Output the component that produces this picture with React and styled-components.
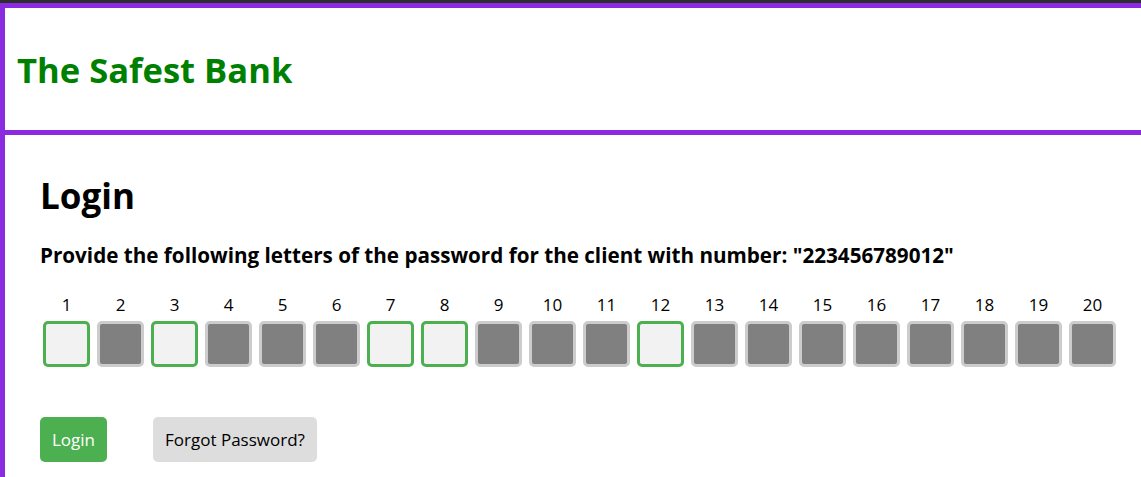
import React from "react";
import styled, { createGlobalStyle } from "styled-components";

const Global = createGlobalStyle`
  html, body { margin: 0; padding: 0; background: #fff; }
  body { font-family: "Open Sans", "Noto Sans", sans-serif; }
`;

const TopStrip = styled.div`
  height: 3px;
  background: #2e2e2e;
`;

const Frame = styled.div`
  border-top: 5px solid #8a2be2;
  border-left: 5px solid #8a2be2;
  min-height: calc(100vh - 3px);
  box-sizing: border-box;
`;

const Header = styled.header`
  height: 122px;
  border-bottom: 5px solid #8a2be2;
  display: flex;
  align-items: center;
  padding-left: 12px;
`;

const Brand = styled.h1`
  margin: 0;
  color: #008000;
  font-size: 34.6px;
  font-weight: 700;
`;

const Main = styled.main`
  padding: 39px 35px 0;
`;

const Title = styled.h2`
  margin: 0;
  font-size: 35px;
  line-height: 44px;
  font-weight: 700;
  color: #000;
`;

const Prompt = styled.p`
  margin: 23px 0 0;
  font-size: 20.65px;
  line-height: 28px;
  font-weight: 700;
  color: #000;
`;

const Grid = styled.div`
  display: flex;
  gap: 7px;
  margin: 25px 0 0 3px;
`;

const Cell = styled.div`
  display: flex;
  flex-direction: column;
  align-items: center;
  width: 47px;
`;

const Num = styled.span`
  font-size: 17px;
  line-height: 22px;
  color: #000;
`;

const Box = styled.div`
  margin-top: 5px;
  width: 47px;
  height: 46px;
  box-sizing: border-box;
  border-radius: 5px;
  border: 3px solid ${(p) => (p.$active ? "#4caf50" : "#cccccc")};
  background: ${(p) => (p.$active ? "#f2f2f2" : "#808080")};
`;

const Actions = styled.div`
  display: flex;
  gap: 46px;
  margin-top: 50px;
`;

const Button = styled.button`
  height: 45px;
  padding: 0 12px;
  border: none;
  border-radius: 5px;
  font-family: inherit;
  font-size: 17px;
  background: ${(p) => (p.$primary ? "#4caf50" : "#dddddd")};
  color: ${(p) => (p.$primary ? "#fff" : "#000")};
  cursor: pointer;
`;

const active = new Set([1, 3, 7, 8, 12]);

export default function App() {
  return (
    <>
      <Global />
      <TopStrip />
      <Frame>
        <Header>
          <Brand>The Safest Bank</Brand>
        </Header>
        <Main>
          <Title>Login</Title>
          <Prompt>
            Provide the following letters of the password for the client with number: "223456789012"
          </Prompt>
          <Grid>
            {Array.from({ length: 20 }, (_, i) => i + 1).map((n) => (
              <Cell key={n}>
                <Num>{n}</Num>
                <Box $active={active.has(n)} />
              </Cell>
            ))}
          </Grid>
          <Actions>
            <Button $primary>Login</Button>
            <Button>Forgot Password?</Button>
          </Actions>
        </Main>
      </Frame>
    </>
  );
}
